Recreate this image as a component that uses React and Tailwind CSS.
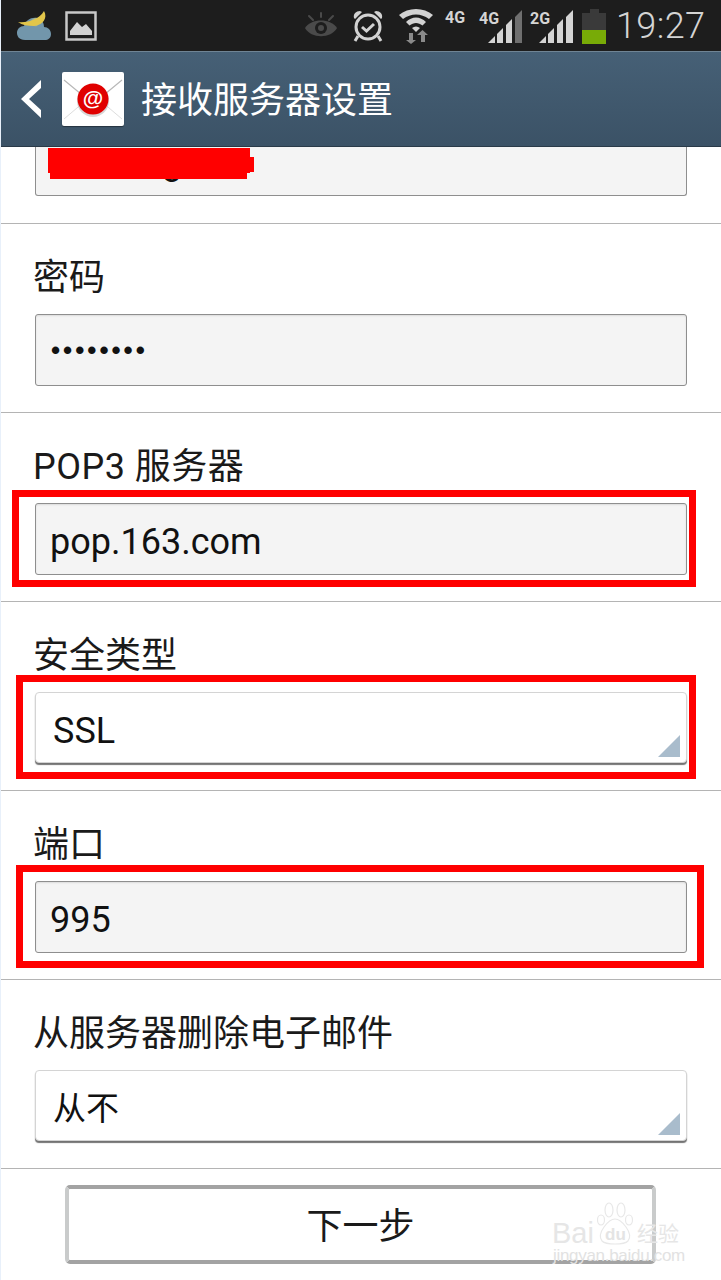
import React from "react";

const FONT = "[font-family:Roboto,'Noto_Sans_CJK_SC',sans-serif]";

function Cloud() {
  return (
    <svg width="36" height="32" viewBox="0 0 36 32" className="ml-[16px]">
      <path d="M9 30 C3 30 1 26 1 23 C1 19 4 16 8 16 C10 10 15 7 21 8 C26 9 28 13 28 17 C32 17 35 20 35 24 C35 28 32 30 29 30Z" fill="#7296ab" />
      <path d="M13 13 C15 9 19 7 24 8 C25 11 24 14 21 16 C18 17 15 15 13 13Z" fill="#a8b48c" />
      <path d="M28 1 C32 8 27 15 18 16 C12 16 6 15 2 12 C11 13 23 10 28 1Z" fill="#e2c64a" />
    </svg>
  );
}

function Picture() {
  return (
    <svg width="32" height="30" viewBox="0 0 32 30" className="ml-[13px]">
      <rect x="1.5" y="1.5" width="29" height="27" fill="none" stroke="#c8c8c8" strokeWidth="2.5" />
      <path d="M5 24 L5 20 L12 11 L17 16 L21 13 L27 20 L27 24Z" fill="#d2d2d2" />
    </svg>
  );
}

function Eye() {
  return (
    <svg width="34" height="28" viewBox="0 0 34 28" className="ml-[207px]">
      <g stroke="#4a4a4a" strokeWidth="2" strokeLinecap="round">
        <path d="M17 1 V5 M5 4 L9 8 M29 4 L25 8" />
      </g>
      <path d="M1 16 C7 6 27 6 33 16 C27 27 7 27 1 16Z" fill="#4a4a4a" />
      <circle cx="17" cy="16" r="6" fill="#1d1d1d" />
      <circle cx="17" cy="16" r="3" fill="#4a4a4a" />
    </svg>
  );
}

function Alarm() {
  return (
    <svg width="34" height="34" viewBox="0 0 34 34" className="ml-[13px]">
      <path d="M3 9 C2 5 5 2 9 2 L11 3 L4 10Z M31 9 C32 5 29 2 25 2 L23 3 L30 10Z" fill="#d2d2d2" />
      <circle cx="17" cy="18" r="12" fill="none" stroke="#d2d2d2" strokeWidth="3" />
      <path d="M11 18 L15.5 22 L23 15" fill="none" stroke="#d2d2d2" strokeWidth="3" />
      <path d="M7 27 L4 32 M27 27 L30 32" stroke="#d2d2d2" strokeWidth="3" />
    </svg>
  );
}

function Wifi() {
  return (
    <svg width="36" height="36" viewBox="0 0 36 36" className="ml-[13px]">
      <path d="M1 7 C10 -1 26 -1 35 7 L31 11 C23 5 13 5 5 11Z" fill="#d2d2d2" />
      <path d="M8 14 C14 8 22 8 28 14 L24.5 17.5 C20.5 14 15.5 14 11.5 17.5Z" fill="#d2d2d2" />
      <path d="M14 20 C16.5 18 19.5 18 22 20 L18 24Z" fill="#d2d2d2" />
      <path d="M11 25 V32 H8 L13 36 L13 36 L18 32 H15 V25Z" fill="#8a8a8a" />
      <path d="M23 34 V27 H19 L24.500 22 L30 27 H27 V34Z" fill="#8a8a8a" />
    </svg>
  );
}

function Signal({ label, lastDim }) {
  return (
    <div className="relative w-[42px] h-[33px] mt-[1px]">
      <svg width="34" height="33" viewBox="0 0 34 33" className="block ml-[9px]">
        <path d="M0 33 L7 26 V33Z" fill="#d4d4d4" />
        <path d="M9 24 L15 18 V33 H9Z" fill="#d4d4d4" />
        <path d="M18 15 L24 9 V33 H18Z" fill="#d4d4d4" />
        <path d="M27 7 L34 0 V33 H27Z" fill={lastDim ? "#6f6f6f" : "#d4d4d4"} />
      </svg>
      <span className={`absolute left-0 top-[1px] text-[16px] leading-[16px] font-bold text-[#d4d4d4] ${FONT}`}>{label}</span>
    </div>
  );
}

function Battery() {
  return (
    <div className="ml-[10px] flex flex-col items-center w-[24px] mt-[1px]">
      <div className="w-[9px] h-[4px] bg-[#3a3a3a]" />
      <div className="w-[24px] h-[17px] bg-[#3a3a3a]" />
      <div className="w-[24px] h-[14px] bg-[#78ab07]" />
    </div>
  );
}

function StatusBar() {
  return (
    <div className="h-[51px] shrink-0 bg-[#1d1d1d] flex items-center">
      <Cloud />
      <Picture />
      <Eye />
      <Alarm />
      <Wifi />
      <span className={`ml-[11px] mb-[15px] w-[25px] text-[16px] leading-[16px] font-bold text-[#d4d4d4] ${FONT}`}>4G</span>
      <div className="ml-[9px]"><Signal label="4G" lastDim /></div>
      <div className="ml-[9px]"><Signal label="2G" /></div>
      <Battery />
      <span className="ml-[10px] text-[36px] leading-none font-light tracking-[0.4px] text-[#d4d4d4] [font-family:Roboto,sans-serif]">19:27</span>
    </div>
  );
}

function MailIcon() {
  return (
    <div className="relative w-[62px] h-[54px] bg-white rounded-[2px] overflow-hidden ml-[20px] shadow-[0_1px_1px_rgba(0,0,0,0.4)]">
      <svg width="62" height="54" viewBox="0 0 62 54" className="block">
        <path d="M2 8 L31 32 L60 8" fill="none" stroke="#b8b8b8" strokeWidth="1.2" />
        <path d="M2 47 L22 30 M60 47 L40 30" fill="none" stroke="#dddddd" strokeWidth="1" />
        <circle cx="31" cy="29" r="16" fill="#bdbdbd" opacity="0.6" />
        <circle cx="31" cy="27" r="15.500" fill="#e00000" />
      </svg>
      <span className="absolute left-0 right-0 top-[14px] text-center text-[21px] leading-[24px] text-white font-bold [font-family:'Liberation_Sans',sans-serif]">@</span>
    </div>
  );
}

function Header() {
  return (
    <div className="h-[96px] shrink-0 bg-[linear-gradient(#466076,#3b5266)] border-t border-[#6f8494] border-b border-b-[#2a3a48] flex items-center pl-[20px] relative z-10">
      <svg width="22" height="40" viewBox="0 0 22 40" className="block">
        <path d="M21 1 L21 9 L9 20 L21 31 L21 39 L1 20Z" fill="#ffffff" />
      </svg>
      <MailIcon />
      <span className={`ml-[17px] pt-[3px] text-[36px] leading-none text-white ${FONT}`}>接收服务器设置</span>
    </div>
  );
}

function Section({ label, children }) {
  return (
    <div className="h-[189px] border-b border-[#b4b4b4] pl-[34px] pr-[34px] flex flex-col">
      <div className={`h-[90px] pt-[34px] -ml-[1px] text-[36px] leading-[40px] text-[#1a1a1a] ${FONT} ${label.startsWith("POP3") ? "tracking-[0.5px]" : ""}`}>{label}</div>
      {children}
    </div>
  );
}

function TextInput({ value, dots }) {
  return (
    <div className={`h-[72px] ml-[1px] bg-[#f4f4f4] border border-[#8e8e8e] rounded-[3px] shadow-[inset_0_1px_2px_rgba(0,0,0,0.1)] flex items-center pl-[14px] text-[36px] text-[#111111] ${FONT}`}>
      {dots ? (
        <span className="pl-[1px] tracking-[3px] text-[26px] leading-none font-bold [font-family:'Liberation_Sans',sans-serif]">••••••••</span>
      ) : (
        <span className="pt-[6px]">{value}</span>
      )}
    </div>
  );
}

function SelectInput({ value, textClass }) {
  return (
    <div className={`relative h-[71px] ml-[1px] bg-white border border-[#d4d4d4] rounded-[4px] shadow-[0_2px_1px_rgba(0,0,0,0.55)] flex items-center pl-[17px] text-[#111111] ${FONT} ${textClass}`}>
      <span className="pt-[7px]">{value}</span>
      <svg width="22" height="22" viewBox="0 0 22 22" className="absolute right-[6px] bottom-[5px]">
        <path d="M22 0 V22 H0Z" fill="#a9bccc" />
      </svg>
    </div>
  );
}

function RedBox({ className }) {
  return <div className={`absolute border-[7px] border-[#ff0000] ${className}`} />;
}

function Watermark() {
  return (
    <div className="absolute left-[552px] top-[1200px] w-[130px] h-[66px] pointer-events-none">
      <svg width="40" height="44" viewBox="0 0 40 44" className="absolute left-[44px] top-[1px]">
        <g fill="none" stroke="#e8e8e8" strokeWidth="1.2">
          <ellipse cx="5" cy="19" rx="3.500" ry="5" />
          <ellipse cx="13" cy="9" rx="4" ry="7" />
          <ellipse cx="25" cy="9" rx="4" ry="7" />
          <ellipse cx="33" cy="19" rx="3.500" ry="5" />
          <path d="M6 40 C0 32 13 18 19 18 C25 18 38 32 32 40 C28 44 10 44 6 40Z" />
        </g>
      </svg>
      <span className="absolute left-0 top-[19px] text-[29px] leading-[29px] text-[#e6e6e6] [font-family:'Liberation_Sans',sans-serif]">Bai</span>
      <span className="absolute left-[53px] top-[26px] text-[17px] leading-[18px] font-bold text-[#e4e4e4] [font-family:'Liberation_Sans',sans-serif]">du</span>
      <span className="absolute left-[85px] top-[20px] text-[21px] leading-[24px] text-[#e6e6e6] [font-family:'Noto_Sans_CJK_SC',sans-serif] whitespace-nowrap">经验</span>
      <span className="absolute left-[1px] top-[47px] text-[17px] leading-[18px] tracking-[-0.3px] text-[#e2e2e2] [font-family:'Liberation_Sans',sans-serif] whitespace-nowrap">jingyan.baidu.com</span>
    </div>
  );
}

export default function App() {
  return (
    <div className="relative w-[721px] h-[1280px] bg-white overflow-hidden flex flex-col">
      <div className="absolute left-0 top-0 bottom-0 w-[1px] bg-[#e8f0fa] z-20" />
      <StatusBar />
      <Header />
      <div className="flex-1 flex flex-col">
        <div className="h-[77px] border-b border-[#b4b4b4] px-[34px]">
          <div className={`h-[49px] ml-[1px] bg-[#f4f4f4] border border-t-0 border-[#8e8e8e] rounded-b-[3px] pl-[126px] text-[36px] leading-[30px] text-[#111111] ${FONT}`}>g</div>
        </div>
        <Section label="密码"><TextInput dots /></Section>
        <Section label="POP3 服务器"><TextInput value="pop.163.com" /></Section>
        <Section label="安全类型"><SelectInput value="SSL" textClass="text-[36px]" /></Section>
        <Section label="端口"><TextInput value="995" /></Section>
        <Section label="从服务器删除电子邮件"><SelectInput value="从不" textClass="text-[33px]" /></Section>
        <div className="flex-1 pt-[16px] pl-[65px]">
          <div className={`w-[591px] h-[79px] pt-[5px] bg-white rounded-[5px] border-[4px] border-[#c9cbcb] border-t-[#a3a3a3] border-b-[#a3a3a3] flex items-center justify-center text-[36px] text-[#1a1a1a] ${FONT}`}>
            下一步
          </div>
        </div>
      </div>
      <div className="absolute left-[48px] top-[148px] w-[202px] h-[25px] bg-[#ff0000]" />
      <div className="absolute left-[50px] top-[173px] w-[197px] h-[6px] bg-[#ff0000]" />
      <div className="absolute left-[250px] top-[157px] w-[4px] h-[15px] bg-[#ff0000]" />
      <RedBox className="left-[12px] top-[490px] w-[684px] h-[97px]" />
      <RedBox className="left-[16px] top-[675px] w-[680px] h-[104px]" />
      <RedBox className="left-[16px] top-[865px] w-[688px] h-[103px]" />
      <Watermark />
    </div>
  );
}
